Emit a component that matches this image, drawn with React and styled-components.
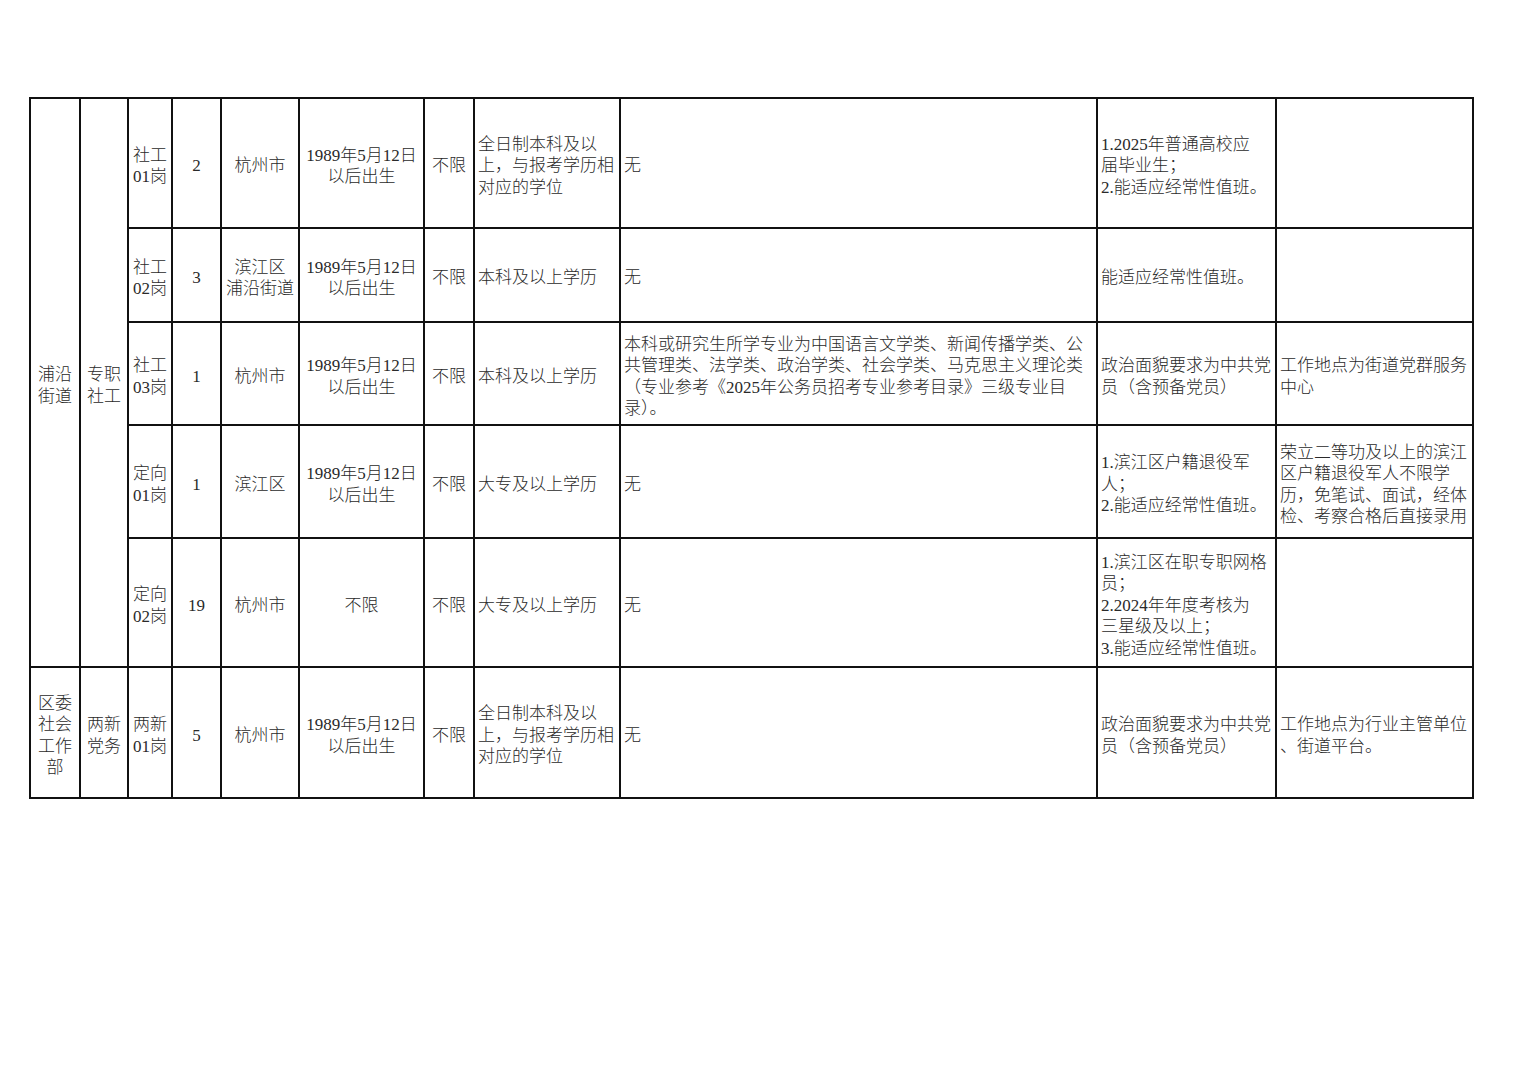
import React from 'react';
import styled, { createGlobalStyle } from 'styled-components';

const GlobalStyle = createGlobalStyle`
  html, body {
    margin: 0;
    padding: 0;
    background: #fff;
  }
  body {
    font-family: 'Liberation Serif', 'Noto Sans CJK SC', serif;
  }
`;

const Page = styled.div`
  padding: 97px 0 0 29px;
  min-height: 1080px;
  box-sizing: border-box;
`;

const Table = styled.table`
  border-collapse: collapse;
  table-layout: fixed;
  width: 1445px;
  border: 2px solid #111;
`;

const Row = styled.tr`
  height: ${(p) => p.$h}px;
`;

const Cell = styled.td`
  border: 2px solid #111;
  padding: 6px 0 0 ${(p) => (p.$left ? '3px' : '0')};
  text-align: ${(p) => (p.$left ? 'left' : 'center')};
  vertical-align: middle;
  font-size: 17px;
  line-height: 21.5px;
  color: #2a2a2a;
  font-weight: 300;
  white-space: nowrap;
  overflow: hidden;
`;

const widths = [50, 48, 44, 49, 78, 125, 50, 146, 477, 179, 197];

const Lines = ({ text }) =>
  text.split('/').map((line, i, arr) => (
    <React.Fragment key={i}>
      {line}
      {i < arr.length - 1 && <br />}
    </React.Fragment>
  ));

const BORN = '1989年5月12日/以后出生';
const DEGREE = '全日制本科及以/上，与报考学历相/对应的学位';
const PARTY = '政治面貌要求为中共党/员（含预备党员）';

const rows = [
  {
    h: 130,
    cells: ['社工/01岗', '2', '杭州市', BORN, '不限'],
    edu: DEGREE,
    major: '无',
    req: '1.2025年普通高校应/届毕业生；/2.能适应经常性值班。',
    note: '',
  },
  {
    h: 94,
    cells: ['社工/02岗', '3', '滨江区/浦沿街道', BORN, '不限'],
    edu: '本科及以上学历',
    major: '无',
    req: '能适应经常性值班。',
    note: '',
  },
  {
    h: 103,
    cells: ['社工/03岗', '1', '杭州市', BORN, '不限'],
    edu: '本科及以上学历',
    major:
      '本科或研究生所学专业为中国语言文学类、新闻传播学类、公/共管理类、法学类、政治学类、社会学类、马克思主义理论类/（专业参考《2025年公务员招考专业参考目录》三级专业目/录）。',
    req: PARTY,
    note: '工作地点为街道党群服务/中心',
  },
  {
    h: 113,
    cells: ['定向/01岗', '1', '滨江区', BORN, '不限'],
    edu: '大专及以上学历',
    major: '无',
    req: '1.滨江区户籍退役军/人；/2.能适应经常性值班。',
    note: '荣立二等功及以上的滨江/区户籍退役军人不限学/历，免笔试、面试，经体/检、考察合格后直接录用',
  },
  {
    h: 129,
    cells: ['定向/02岗', '19', '杭州市', '不限', '不限'],
    edu: '大专及以上学历',
    major: '无',
    req: '1.滨江区在职专职网格/员；/2.2024年年度考核为/三星级及以上；/3.能适应经常性值班。',
    note: '',
  },
];

const lastRow = {
  h: 131,
  cells: ['两新/01岗', '5', '杭州市', BORN, '不限'],
  edu: DEGREE,
  major: '无',
  req: PARTY,
  note: '工作地点为行业主管单位/、街道平台。',
};

const RowCells = ({ row }) => (
  <>
    {row.cells.map((c, i) => (
      <Cell key={i}>
        <Lines text={c} />
      </Cell>
    ))}
    <Cell $left>
      <Lines text={row.edu} />
    </Cell>
    <Cell $left>
      <Lines text={row.major} />
    </Cell>
    <Cell $left>
      <Lines text={row.req} />
    </Cell>
    <Cell $left>
      <Lines text={row.note} />
    </Cell>
  </>
);

const App = () => (
  <Page>
    <GlobalStyle />
    <Table>
      <colgroup>
        {widths.map((w, i) => (
          <col key={i} style={{ width: w }} />
        ))}
      </colgroup>
      <tbody>
        {rows.map((row, i) => (
          <Row key={i} $h={row.h}>
            {i === 0 && (
              <>
                <Cell rowSpan={5}>
                  <Lines text="浦沿/街道" />
                </Cell>
                <Cell rowSpan={5}>
                  <Lines text="专职/社工" />
                </Cell>
              </>
            )}
            <RowCells row={row} />
          </Row>
        ))}
        <Row $h={lastRow.h}>
          <Cell>
            <Lines text="区委/社会/工作/部" />
          </Cell>
          <Cell>
            <Lines text="两新/党务" />
          </Cell>
          <RowCells row={lastRow} />
        </Row>
      </tbody>
    </Table>
  </Page>
);

export default App;
